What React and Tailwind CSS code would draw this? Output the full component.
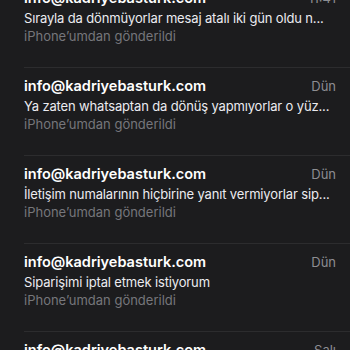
import React from "react";

const mails = [
  {
    from: "info@kadriyebasturk.com",
    time: "11:41",
    subject: "Sırayla da dönmüyorlar mesaj atalı iki gün oldu n...",
  },
  {
    from: "info@kadriyebasturk.com",
    time: "Dün",
    subject: "Ya zaten whatsaptan da dönüş yapmıyorlar o yüz...",
  },
  {
    from: "info@kadriyebasturk.com",
    time: "Dün",
    subject: "İletişim numalarının hiçbirine yanıt vermiyorlar sip...",
  },
  {
    from: "info@kadriyebasturk.com",
    time: "Dün",
    subject: "Siparişimi iptal etmek istiyorum",
  },
  {
    from: "info@kadriyebasturk.com",
    time: "Salı",
    subject: "Siparişimi iptal etmek istiyorum",
  },
];

const MailRow = ({ mail }) => (
  <div className="pl-6 h-[88px]">
    <div className="h-full border-t border-[#2c2c2e] pt-[7px] pr-[14px]">
      <div className="flex items-baseline justify-between gap-3">
        <span className="text-[14.5px] leading-[22px] font-semibold text-white whitespace-nowrap">
          {mail.from}
        </span>
        <span className="text-[13px] leading-[22px] text-[#8d8d92] flex-shrink-0">
          {mail.time}
        </span>
      </div>
      <p className="text-[13px] leading-[18px] tracking-[-0.15px] text-[#ebebf0] whitespace-nowrap">
        {mail.subject}
      </p>
      <p className="text-[13px] leading-[18px] text-[#76767b] whitespace-nowrap">
        iPhone’umdan gönderildi
      </p>
    </div>
  </div>
);

export default function App() {
  return (
    <div
      className="w-[350px] h-[350px] overflow-hidden bg-[#1c1c1e]"
      style={{ fontFamily: "Inter, 'Noto Sans', sans-serif" }}
    >
      <div className="-mt-[21px]">
        {mails.map((mail, i) => (
          <MailRow key={i} mail={mail} />
        ))}
      </div>
    </div>
  );
}
